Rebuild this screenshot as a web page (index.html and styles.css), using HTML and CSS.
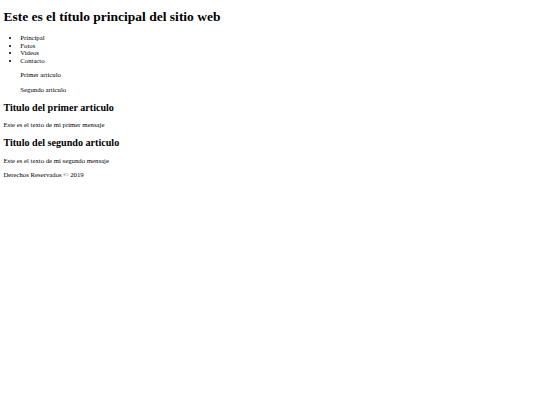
FILE: index.html
```html
<!DOCTYPE html>
<html lang="es">
<head>
<meta charset="utf-8">
<title>Sitio web</title>
<link rel="stylesheet" href="styles.css">
</head>
<body class="page">
<header>
<h1 class="title">Este es el título principal del sitio web</h1>
</header>
<nav>
<ul class="menu">
<li>Principal</li>
<li>Fotos</li>
<li>Videos</li>
<li>Contacto</li>
</ul>
</nav>
<aside class="side">
<p class="text">Primer articulo</p>
<p class="text">Segundo artículo</p>
</aside>
<main>
<article>
<h2 class="subtitle">Titulo del primer articulo</h2>
<p class="text">Este es el texto de mi primer mensaje</p>
</article>
<article>
<h2 class="subtitle">Titulo del segundo articulo</h2>
<p class="text">Este es el texto de mi segundo mensaje</p>
</article>
</main>
<footer>
<p class="text">Derechos Reservados © 2019</p>
</footer>
</body>
</html>
```

FILE: styles.css
```css
html {
  background: #ffffff;
}
.page {
  margin: 3.375px;
  font-family: "Liberation Serif", "Times New Roman", serif;
  font-size: 6.75px;
  line-height: 7.594px;
  color: #000000;
}
.title {
  font-size: 13.5px;
  line-height: 15.61px;
  font-weight: bold;
  margin: 6.05px 0 9.045px;
}
.menu {
  margin: 6.75px 0;
  padding-left: 16.875px;
  list-style: disc;
}
.side {
  padding-left: 16.875px;
}
.text {
  margin: 6.75px 0;
}
.subtitle {
  font-size: 10.125px;
  line-height: 11.39px;
  font-weight: bold;
  margin: 8.4px 0;
}
```
